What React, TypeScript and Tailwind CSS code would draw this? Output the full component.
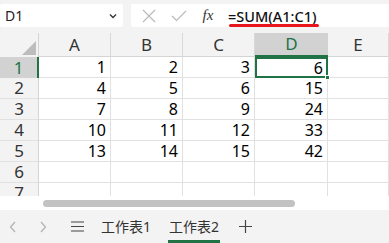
import React from "react";

const cols = ["A", "B", "C", "D", "E"];
const data = [
  [1, 2, 3, 6],
  [4, 5, 6, 15],
  [7, 8, 9, 24],
  [10, 11, 12, 33],
  [13, 14, 15, 42],
  [null, null, null, null],
  [null, null, null, null],
];

export default function App() {
  return (
    <div
      className="w-[389px] h-[243px] overflow-hidden bg-[#f3f3f3] flex flex-col"
      style={{ fontFamily: '"Noto Sans", "Open Sans", sans-serif' }}
    >
      {/* formula bar */}
      <div className="h-[33px] flex items-start pt-[4px] gap-[8px] shrink-0">
        <div className="w-[123px] h-[23px] bg-white flex items-center justify-between pl-[5px] pr-[6px] rounded-[2px]">
          <span className="text-[14px] text-[#222] leading-none">D1</span>
          <svg width="8" height="6" viewBox="0 0 8 6">
            <path d="M1 1.5 L4 4.5 L7 1.5" fill="none" stroke="#333" strokeWidth="1.3" />
          </svg>
        </div>
        <div className="flex-1 h-[23px] bg-white flex items-center rounded-l-[2px]">
          <div className="w-[32px] flex justify-center ml-[2px]">
            <svg width="14" height="14" viewBox="0 0 14 14">
              <path d="M1 1 L13 13 M13 1 L1 13" stroke="#b8b8b8" strokeWidth="1.1" />
            </svg>
          </div>
          <div className="w-[28px] flex justify-center">
            <svg width="16" height="12" viewBox="0 0 16 12">
              <path d="M1 6 L5.5 10.5 L15 1" fill="none" stroke="#b8b8b8" strokeWidth="1.1" />
            </svg>
          </div>
          <div
            className="w-[30px] text-center text-[15px] italic text-[#333] leading-none"
            style={{ fontFamily: '"Liberation Serif", serif' }}
          >
            fx
          </div>
          <div className="relative ml-[5px]">
            <span className="text-[14.5px] text-[#111] font-medium leading-none">=SUM(A1:C1)</span>
            <div className="absolute left-[1px] right-[-2px] top-[20px] h-[3px] rounded-full bg-[#e8161b]" />
          </div>
        </div>
      </div>

      {/* grid */}
      <div className="h-[163px] overflow-hidden bg-white shrink-0">
        <div className="grid grid-cols-[39px_72px_72px_72px_73px_61px] grid-rows-[24px_repeat(7,21px)]">
          <div className="bg-[#f3f3f3] border-r border-[#d4d4d4] flex items-end justify-end pr-[2px] pb-[2px]">
            <svg width="14" height="14" viewBox="0 0 14 14">
              <path d="M14 0 L14 14 L0 14 Z" fill="#bdbdbd" />
            </svg>
          </div>
          {cols.map((c) => (
            <div
              key={c}
              className={
                c === "D"
                  ? "bg-[#d2d2d2] border-b-2 border-[#217346] text-[#217346] flex items-center justify-center text-[17px] leading-[20px]"
                  : "bg-[#f3f3f3] border-r border-[#d9d9d9] border-b border-b-[#d4d4d4] text-[#333] flex items-center justify-center text-[17px] leading-[20px]"
              }
            >
              {c}
            </div>
          ))}
          {data.map((row, ri) => (
            <React.Fragment key={ri}>
              <div
                className={
                  ri === 0
                    ? "bg-[#d2d2d2] border-r-2 border-[#217346] text-[#217346] flex items-center justify-center text-[17px] leading-[20px]"
                    : "bg-[#f3f3f3] border-r border-[#d4d4d4] border-b border-b-[#e1e1e1] text-[#333] flex items-center justify-center text-[17px] leading-[20px]"
                }
              >
                {ri + 1}
              </div>
              {row.map((v, ci) => {
                const sel = ri === 0 && ci === 3;
                return (
                  <div
                    key={ci}
                    className={
                      sel
                        ? "relative border-2 border-[#217346] flex items-center justify-end pr-[3px] text-[16px] leading-[18px] text-black"
                        : "border-r border-b border-[#e1e1e1] flex items-center justify-end pr-[4px] text-[16px] leading-[20px] text-black"
                    }
                  >
                    {v}
                    {sel && (
                      <div className="absolute right-[-4px] bottom-[-4px] w-[5px] h-[5px] bg-[#217346] border border-white" />
                    )}
                  </div>
                );
              })}
              <div className="border-r border-b border-[#e1e1e1]" />
            </React.Fragment>
          ))}
        </div>
      </div>

      {/* scrollbar */}
      <div className="h-[14px] bg-white flex items-center pl-[43px] shrink-0">
        <div className="w-[252px] h-[7px] rounded-full bg-[#c2c2c2]" />
      </div>

      {/* tabs */}
      <div className="flex-1 flex items-stretch text-[14px] text-[#333]">
        <div className="w-[26px] flex items-center justify-center">
          <svg width="8" height="12" viewBox="0 0 8 12">
            <path d="M6 1 L1.5 6 L6 11" fill="none" stroke="#b0b0b0" strokeWidth="1.2" />
          </svg>
        </div>
        <div className="w-[34px] flex items-center justify-center">
          <svg width="8" height="12" viewBox="0 0 8 12">
            <path d="M2 1 L6.5 6 L2 11" fill="none" stroke="#b0b0b0" strokeWidth="1.2" />
          </svg>
        </div>
        <div className="w-[34px] flex items-center justify-center">
          <svg width="13" height="11" viewBox="0 0 13 11">
            <path d="M0 1 H13 M0 5.5 H13 M0 10 H13" stroke="#444" strokeWidth="1.2" />
          </svg>
        </div>
        <div
          className="flex items-center ml-[7px] w-[68px]"
          style={{ fontFamily: '"Noto Sans", "Noto Sans CJK SC", sans-serif' }}
        >
          工作表1
        </div>
        <div
          className="relative flex items-center"
          style={{ fontFamily: '"Noto Sans", "Noto Sans CJK SC", sans-serif' }}
        >
          工作表2
          <div className="absolute left-[-1px] right-[-1px] bottom-0 h-[3px] bg-[#217346]" />
        </div>
        <div className="flex items-center ml-[20px]">
          <svg width="13" height="13" viewBox="0 0 13 13">
            <path d="M6.5 0 V13 M0 6.5 H13" stroke="#444" strokeWidth="1.2" />
          </svg>
        </div>
      </div>
    </div>
  );
}
